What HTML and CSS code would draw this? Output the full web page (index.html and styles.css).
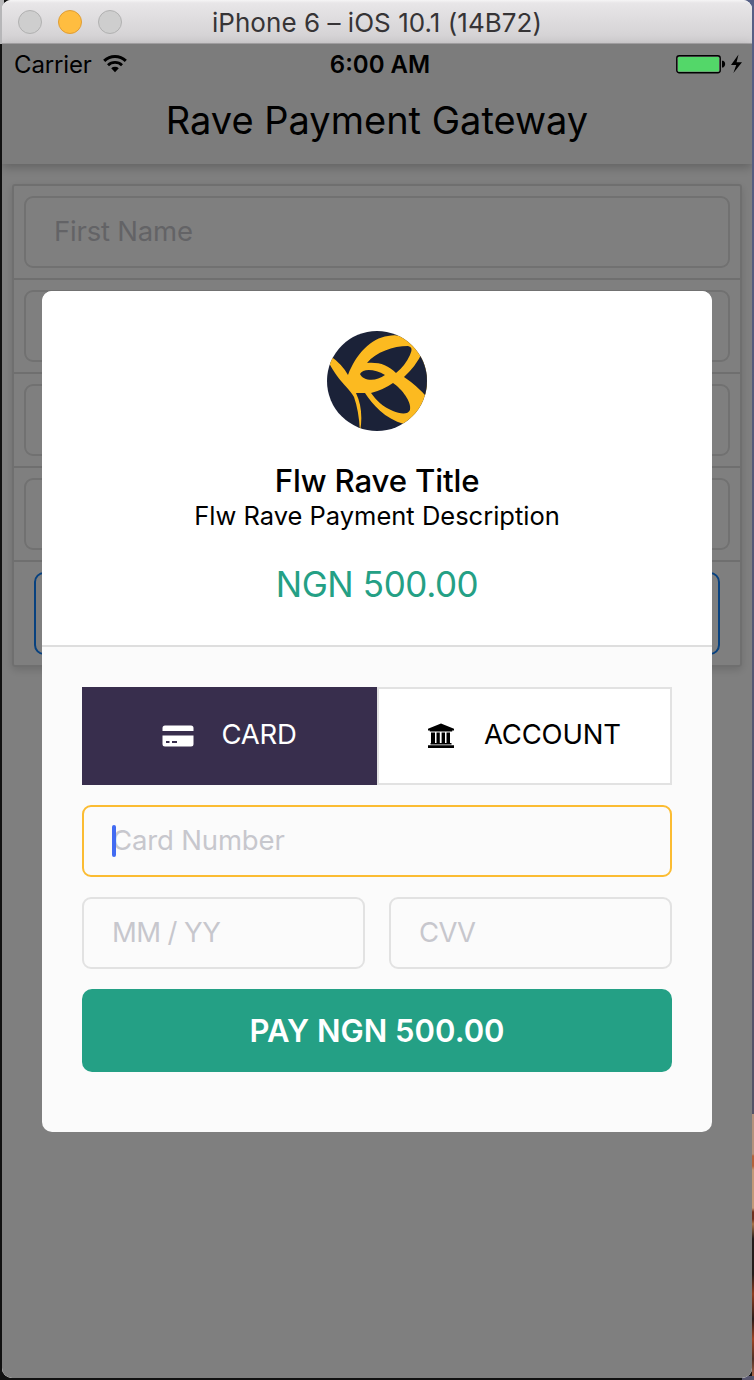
FILE: index.html
```html
<!DOCTYPE html>
<html lang="en">
<head>
<meta charset="utf-8">
<title>Rave Payment Gateway</title>
<link rel="stylesheet" href="styles.css">
</head>
<body>
<div class="desktop">
  <main class="window">
    <header class="titlebar">
      <div class="lights"><i></i><i class="amber"></i><i></i></div>
      <span class="window-title">iPhone 6 – iOS 10.1 (14B72)</span>
    </header>
    <section class="screen">
      <div class="navbar">
        <div class="status">
          <div class="carrier"><span>Carrier</span>
            <svg width="26" height="20" viewBox="0 0 26 20"><path d="M2.200 6.900a15.500 15.500 0 0 1 21.600 0" fill="none" stroke="#000" stroke-width="3"/><path d="M6 11.200a10 10 0 0 1 14 0" fill="none" stroke="#000" stroke-width="2.800"/><path d="M9.200 14.300a5.600 5.600 0 0 1 7.600 0L13 18.200z"/></svg>
          </div>
          <span class="clock">6:00 AM</span>
          <div class="power">
            <svg width="68" height="20" viewBox="0 0 68 20"><rect x=".75" y="1.75" width="43.5" height="17" rx="2.5" fill="none" stroke="#000" stroke-width="1.3"/><rect x="2" y="3" width="41" height="14.5" rx="1.2" fill="#53d769"/><path d="M46 6.800h1.200q2 1 2 3.300t-2 3.400H46z"/><path d="M62.500.5 55 11h5.200l-2.800 8L66 8.200h-5.400z"/></svg>
          </div>
        </div>
        <h1 class="page-title">Rave Payment Gateway</h1>
      </div>
      <div class="form-card">
        <div class="row"><div class="field"><span class="first-name">First Name</span></div></div>
        <div class="row"><div class="field"></div></div>
        <div class="row"><div class="field"></div></div>
        <div class="row"><div class="field"></div></div>
        <div class="row action"><div class="outline-button"></div></div>
      </div>
      <div class="overlay">
        <div class="modal">
          <div class="summary">
            <svg class="logo" width="100" height="100" viewBox="0 0 100 100">
              <defs><clipPath id="disc"><circle cx="50" cy="50" r="50"/></clipPath></defs>
              <g clip-path="url(#disc)">
                <rect width="100" height="100" fill="#1b2238"/>
                <path fill="#fcba20" d="M2 24Q15 33 21 44C29 23 44 7 61 5Q75 2 87 12L98 13L101 70V91Q89 97 77 93C58 88 45 73 38 62L29 62Q37 79 33 101Q32 80 27 66C21 55 11 51 0 28Z"/>
                <g fill="#1b2238">
                  <path d="M40 32C49 21 66 15 81 15Q87 16 83 24Q78 35 69 42C61 34 52 31 40 32Z"/>
                  <path d="M33 43C36 37 48 38 58 44C49 51 36 50 33 43Z"/>
                  <path d="M44 62Q56 59 66 52C75 58 85 71 83 79C81 84 73 83 66 80C56 76 49 69 44 62Z"/>
                  <path d="M77 46Q89 35 95 22L103 16V70Q92 56 77 46Z"/>
                </g>
              </g>
            </svg>
            <h2 class="title">Flw Rave Title</h2>
            <p class="description">Flw Rave Payment Description</p>
            <p class="amount">NGN 500.00</p>
          </div>
          <div class="payment">
            <div class="tabs">
              <div class="tab active">
                <svg width="32" height="22" viewBox="0 0 32 22"><path fill="#fff" d="M3 .5h26q2.500 0 2.500 2.500v3H.5V3Q.5.5 3 .5zM.5 10.500h31V19q0 2.500-2.500 2.500H3Q.5 21.500.5 19z"/><path d="M4 17h3.500M10 17h5" stroke="#382e4d" stroke-width="1.800"/></svg>
                <span class="tab-label">CARD</span>
              </div>
              <div class="tab account">
                <svg width="28" height="26" viewBox="0 0 28 26"><path d="M14 .5 27 5.800V7.500h-1.800v1H2.800v-1H1V5.800zM4 9.500h4V20h1.500V9.500h3.300V20h1.800V9.500H18V20h1.500V9.500H23V20h1.500v1.500h-21V20H4zM1 22.300h26V25H1z"/></svg>
                <span class="tab-label">ACCOUNT</span>
              </div>
            </div>
            <div class="input focused"><i class="caret"></i><span class="number-label">Card Number</span></div>
            <div class="pair">
              <div class="input"><span class="expiry-label">MM / YY</span></div>
              <div class="input"><span class="cvv-label">CVV</span></div>
            </div>
            <div class="pay"><span class="pay-label">PAY NGN 500.00</span></div>
          </div>
        </div>
      </div>
    </section>
  </main>
</div>
</body>
</html>
```
FILE: styles.css
```css
* { box-sizing: border-box; }
body { margin: 0; font-family: Inter, "Liberation Sans", sans-serif; color: #000; }
h1, h2, p { margin: 0; font-weight: 400; }
span, h1, h2, p { white-space: nowrap; }
svg { display: block; flex: none; }
.desktop {
  width: 754px; height: 1380px; padding: 0 2px 2px; overflow: hidden;
  background:
    linear-gradient(#565570, #57556c) right bottom / 12px 4px no-repeat,
    linear-gradient(#b5927c 0 40px, #b4623b 42px 52px, #c39978 56px 94px, #70301f 98px 105px, #a77247 110px, #251b1b 125px 160px, #903d20 180px, #2b1b1a 205px, #a14424 225px, #503027 245px, #b86b4c 265px) right 1114px / 2px 266px no-repeat,
    linear-gradient(#565f86, #555267) right top / 12px 1114px no-repeat,
    linear-gradient(#b6b6b8, #b6b6b8) left top / 4px 44px no-repeat,
    #111;
}
.window { width: 750px; height: 1378px; border-radius: 9px 9px 10px 10px; overflow: hidden; background: #fff; }
.titlebar {
  display: grid; grid-template-columns: 140px 1fr 140px; align-items: center;
  height: 44px; border-bottom: 1px solid #aaa8aa;
  background: linear-gradient(#f6f5f6 0, #e8e6e8 3px, #d1cfd1 100%);
}
.lights { display: flex; gap: 16px; padding-left: 16px; }
.lights i { width: 24px; height: 24px; border: 1px solid #b1b1b1; border-radius: 50%; background: #cecece; }
.lights .amber { background: #ffbd40; border-color: #df9d35; }
.window-title { justify-self: center; padding-top: 2px; font-size: 26px; letter-spacing: .04px; line-height: 30px; color: #363436; }
.screen { position: relative; height: 1334px; background: #fff; }
.navbar { height: 120px; background: #f8f8f8; box-shadow: 0 3px 10px rgba(0, 0, 0, .25); }
.status {
  position: relative; z-index: 3; display: grid; grid-template-columns: 1fr auto 1fr;
  align-items: center; height: 40px; padding: 0 8px 0 12px;
}
.carrier { display: flex; align-items: center; gap: 10px; font-size: 24px; letter-spacing: -.15px; }
.clock { padding-left: 2px; font-size: 24px; font-weight: 600; }
.power { justify-self: end; }
.page-title { height: 74px; line-height: 72px; text-align: center; font-size: 38px; }
.form-card {
  margin: 20px 10px 0; border: 2px solid #dedede; border-radius: 3px;
  box-shadow: 0 3px 8px rgba(0, 0, 0, .15);
}
.row { height: 94px; padding: 10px; border-bottom: 2px solid #dedede; }
.field {
  display: flex; align-items: center; height: 72px; padding: 0 0 2px 28px;
  border: 2px solid #e2e2e2; border-radius: 9px; font-size: 27.5px; color: #c7c7cc;
}
.first-name { letter-spacing: -.2px; }
.action { height: 103px; padding: 10px 20px; border: 0; }
.outline-button { height: 83px; border: 2px solid #0f82ff; border-radius: 10px; }
.overlay {
  position: absolute; inset: 0; z-index: 2; display: flex; justify-content: center;
  align-items: flex-start; padding-top: 247px; background: rgba(0, 0, 0, .5);
}
.modal { width: 670px; height: 841px; border-radius: 10px; overflow: hidden; background: #fbfbfb; }
.summary {
  display: flex; flex-direction: column; align-items: center; height: 356px;
  padding-top: 40px; border-bottom: 2px solid #dedede; background: #fff;
}
.title { margin-top: 32px; height: 38px; line-height: 37px; font-size: 31.2px; letter-spacing: -.15px; font-weight: 500; }
.description { height: 32px; line-height: 29px; font-size: 25.5px; }
.amount { margin-top: 30px; height: 44px; line-height: 43px; font-size: 35px; letter-spacing: -.4px; color: #24a085; }
.payment { display: flex; flex-direction: column; gap: 20px; padding: 40px; }
.tabs { display: grid; grid-template-columns: 295px 295px; height: 98px; }
.tab { display: flex; align-items: center; padding-left: 80px; font-size: 27.5px; background: #fff; }
.tab-label { padding-bottom: 5px; letter-spacing: -.2px; }
.active { gap: 28px; padding-left: 79.5px; color: #fff; background: #382e4d; }
.account { gap: 29px; padding-left: 48px; border: 2px solid #e2e2e2; }
.input {
  position: relative; display: flex; align-items: center; height: 72px; padding: 0 0 2px 28px;
  border: 2px solid #e2e2e2; border-radius: 9px; font-size: 27.5px; color: #c7c7cd;
}
.number-label { letter-spacing: -.15px; }
.expiry-label { letter-spacing: -.6px; }
.cvv-label { letter-spacing: -.7px; }
.focused { border-color: #fbbc32; }
.caret { position: absolute; left: 28px; top: 18px; width: 4px; height: 32px; border-radius: 2px; background: #426bf2; }
.pair { display: grid; grid-template-columns: 1fr 1fr; gap: 24px; }
.pay {
  display: flex; align-items: center; justify-content: center; height: 83px;
  border-radius: 10px; background: #24a085; color: #fff; font-size: 31px; font-weight: 600;
}
```
